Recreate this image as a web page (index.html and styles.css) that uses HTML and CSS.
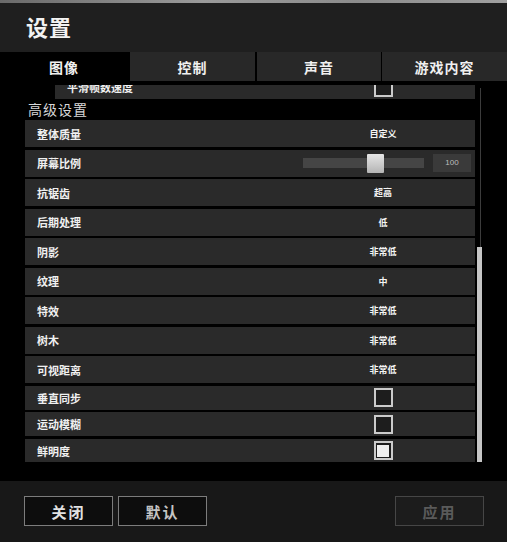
FILE: index.html
```html
<!DOCTYPE html>
<html lang="zh-CN">
<head>
    <meta charset="UTF-8">
    <meta name="viewport" content="width=device-width, initial-scale=1.0">
    <title>设置</title>
    <link rel="stylesheet" href="styles.css">
</head>
<body>
    <div class="window">
        <div class="top-strip"></div>

        <!-- 标题 -->
        <div class="header">设置</div>

        <!-- 选项卡 -->
        <div class="tabs">
            <button class="tab active">图像</button>
            <button class="tab">控制</button>
            <button class="tab">声音</button>
            <button class="tab">游戏内容</button>
        </div>

        <!-- 设置列表 -->
        <div class="content">
            <div class="viewport">
                <div class="list">
                    <div class="row row-check row-sub">
                        <span class="label">平滑帧数速度</span>
                        <span class="value"><span class="checkbox"></span></span>
                    </div>

                    <div class="section-title">高级设置</div>

                    <div class="row">
                        <span class="label">整体质量</span>
                        <span class="value">自定义</span>
                    </div>
                    <div class="row">
                        <span class="label">屏幕比例</span>
                        <span class="value slider-cell">
                            <span class="track"><span class="thumb"></span></span>
                            <span class="num">100</span>
                        </span>
                    </div>
                    <div class="row">
                        <span class="label">抗锯齿</span>
                        <span class="value">超高</span>
                    </div>
                    <div class="row">
                        <span class="label">后期处理</span>
                        <span class="value">低</span>
                    </div>
                    <div class="row">
                        <span class="label">阴影</span>
                        <span class="value">非常低</span>
                    </div>
                    <div class="row">
                        <span class="label">纹理</span>
                        <span class="value">中</span>
                    </div>
                    <div class="row">
                        <span class="label">特效</span>
                        <span class="value">非常低</span>
                    </div>
                    <div class="row">
                        <span class="label">树木</span>
                        <span class="value">非常低</span>
                    </div>
                    <div class="row">
                        <span class="label">可视距离</span>
                        <span class="value">非常低</span>
                    </div>
                    <div class="row row-check">
                        <span class="label">垂直同步</span>
                        <span class="value"><span class="checkbox"></span></span>
                    </div>
                    <div class="row row-check">
                        <span class="label">运动模糊</span>
                        <span class="value"><span class="checkbox"></span></span>
                    </div>
                    <div class="row row-check">
                        <span class="label">鲜明度</span>
                        <span class="value"><span class="checkbox checked"></span></span>
                    </div>
                </div>
            </div>

            <!-- 滚动条 -->
            <div class="scroll-track"></div>
            <div class="scroll-thumb"></div>
        </div>

        <!-- 底部按钮 -->
        <div class="footer">
            <button class="btn">关闭</button>
            <button class="btn btn-dim">默认</button>
            <button class="btn btn-disabled">应用</button>
        </div>
    </div>
</body>
</html>
```

FILE: styles.css
```css
body {
    margin: 0;
    background-color: #000;
    font-family: "Noto Sans CJK SC", "Liberation Sans", sans-serif;
    color: #eee;
}

.window {
    width: 507px;
    height: 542px;
    display: flex;
    flex-direction: column;
    overflow: hidden;
}

.top-strip {
    height: 3px;
    background: linear-gradient(to right, #6a6a6a, #9a9a9a 40%, #8c8c8c 70%, #a0a0a0);
}

/* 标题 */
.header {
    height: 49px;
    background-color: #1f1f1f;
    padding-left: 26px;
    font-size: 22px;
    font-weight: bold;
    line-height: 47px;
    color: #f2f2f2;
    letter-spacing: 1px;
}

/* 选项卡 */
.tabs {
    height: 29px;
    display: grid;
    grid-template-columns: 128px 127px 126px 126px;
    background-color: #000;
}

.tab {
    background-color: #282828;
    border: none;
    border-left: 2px solid #000;
    color: #f0f0f0;
    font-family: inherit;
    font-size: 14px;
    font-weight: bold;
    letter-spacing: 1px;
    padding: 0;
    cursor: pointer;
}

.tab.active {
    background-color: #000;
    border-left: none;
}

.tab:last-child {
    border-left-width: 1px;
}

/* 设置列表 */
.content {
    height: 400px;
    box-sizing: border-box;
    padding-top: 4px;
    background-color: #000;
    position: relative;
}

.viewport {
    height: 377px;
    overflow: hidden;
}

.list {
    margin-top: -10px;
    padding-left: 25px;
    width: 450px;
}

.row {
    height: 27px;
    margin-bottom: 2.55px;
    background-color: #2a2a2a;
    display: flex;
    align-items: center;
}

.row-check {
    height: 24px;
    margin-bottom: 2.5px;
}

.row-sub {
    margin-left: 30px;
    margin-bottom: 0;
}

.row-sub .label {
    padding-left: 12px;
}

.row .label {
    flex: 1;
    padding-left: 12px;
    font-size: 11px;
    font-weight: bold;
    color: #f0f0f0;
}

.row .value {
    width: 184px;
    text-align: center;
    font-size: 9px;
    font-weight: bold;
    color: #f4f4f4;
    display: flex;
    justify-content: center;
    align-items: center;
}

.section-title {
    height: 21px;
    line-height: 21px;
    padding-left: 3px;
    font-size: 14px;
    color: #d8d8d8;
    letter-spacing: 1px;
}

/* 滑块 */
.value.slider-cell {
    justify-content: flex-start;
    padding-left: 12px;
    box-sizing: border-box;
    gap: 9px;
}

.track {
    position: relative;
    width: 121px;
    height: 10px;
    background-color: #454545;
}

.thumb {
    position: absolute;
    left: 64px;
    top: -4px;
    width: 17px;
    height: 19px;
    background: linear-gradient(#e6e6e6, #b4b4b4);
    border-radius: 1px;
}

.num {
    width: 38px;
    height: 18px;
    line-height: 18px;
    background-color: #3a3a3a;
    font-size: 8px;
    font-weight: normal;
    color: #bdbdbd;
    font-family: "Liberation Sans", sans-serif;
}

/* 复选框 */
.checkbox {
    position: relative;
    width: 19px;
    height: 19px;
    box-sizing: border-box;
    border: 2px solid #cbcbcb;
    background-color: #1d1d1d;
}

.checkbox.checked::after {
    content: "";
    position: absolute;
    top: 1.5px;
    left: 1.5px;
    right: 1.5px;
    bottom: 1.5px;
    background-color: #efefef;
}

/* 滚动条 */
.scroll-track {
    position: absolute;
    left: 480px;
    top: 7px;
    width: 1px;
    height: 160px;
    background-color: #3c3c3c;
}

.scroll-thumb {
    position: absolute;
    left: 477px;
    top: 166px;
    width: 5px;
    height: 215px;
    background-color: #c6c6c6;
}

/* 底部按钮 */
.footer {
    flex: 1;
    background-color: #181818;
    display: flex;
    padding: 15px 23px 0 24px;
    gap: 5px;
}

.btn {
    width: 89px;
    height: 30px;
    box-sizing: border-box;
    background-color: #0d0d0d;
    border: 1px solid #7c7c7c;
    color: #e2e2e2;
    font-family: inherit;
    font-size: 15px;
    font-weight: bold;
    letter-spacing: 2px;
    cursor: pointer;
}

.btn-dim {
    color: #c4c4c4;
}

.btn-disabled {
    margin-left: auto;
    background-color: #1c1c1c;
    border-color: #464646;
    color: #5a5a5a;
}
```
